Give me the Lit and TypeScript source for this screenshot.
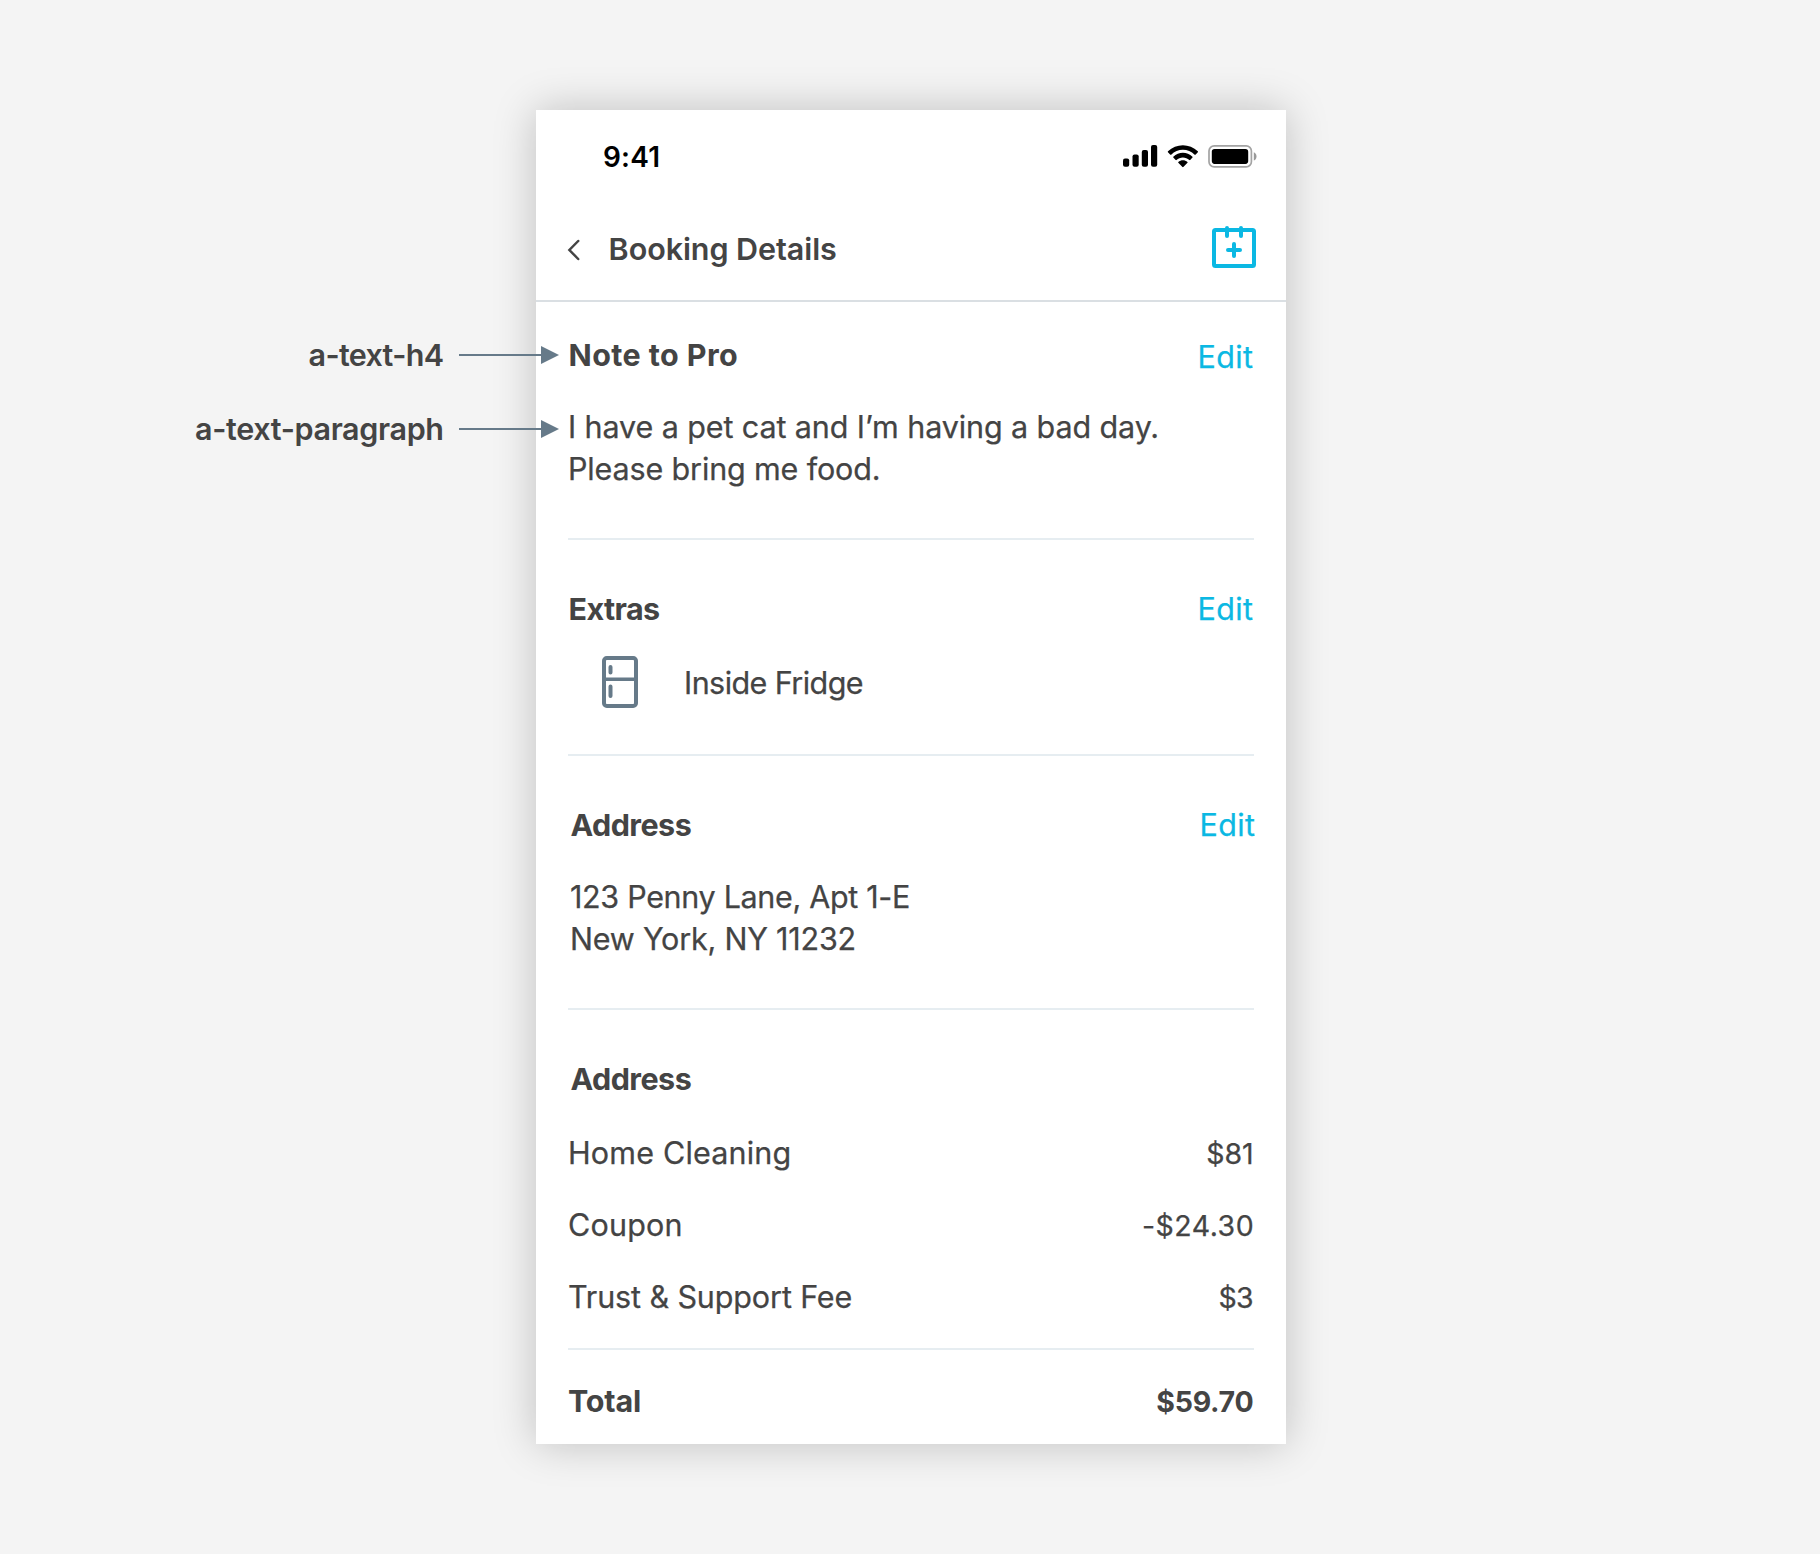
import { LitElement, html, css, svg, nothing } from "lit";
import { customElement, property } from "lit/decorators.js";
import { styleMap } from "lit/directives/style-map.js";

type Label = { text: string; track: number };
const l = (text: string, track = 0): Label => ({ text, track });

/** Text with its own tracking; the trailing gap is cancelled so that right-aligned text ends flush. */
const label = ({ text, track }: Label) =>
  html`<span style=${styleMap({ letterSpacing: `${track}px`, marginRight: `${-track}px` })}>${text}</span>`;

const annotations = [l("a-text-h4", -0.68), l("a-text-paragraph", -0.35)];
const costs: [Label, Label][] = [
  [l("Home Cleaning", 0.18), l("$81", 0)],
  [l("Coupon", 0.2), l("-$24.30", 0.5)],
  [l("Trust & Support Fee", -0.12), l("$3", -0.7)],
];

const arrow = html`<svg class="arrow" width="100" height="18" viewBox="0 0 100 18">
  <path d="M0 9H84" stroke="#667a89" stroke-width="2" />
  <path d="M82 0L100 9L82 18Z" fill="#667a89" />
</svg>`;

const signalIcon = html`<svg width="36" height="22" viewBox="0 0 36 22">
  ${[[1, 13.4], [10.5, 9.4], [19.8, 4.9], [29, 0.1]].map(
    ([x, y]) => svg`<rect x=${x} y=${y} width="6.2" height=${21.8 - y} rx="2" />`,
  )}
</svg>`;

const wifiIcon = html`<svg width="32" height="23" viewBox="1 0 30 21.5">
  <path
    d="M15.9 4.5c4.1 0 8 1.6 11 4.5.2.2.6.2.8 0l2.2-2.2c.2-.2.2-.6 0-.9C22.2-1.6 9.6-1.6 1.9 5.9c-.2.3-.2.7 0 .9l2.2 2.2c.2.2.6.2.8 0 3-2.9 6.900-4.500 11-4.500z"
  />
  <path
    d="M15.9 11.7c2.2 0 4.4.9 6 2.4.2.2.6.2.8 0l2.2-2.3c.2-.2.2-.6 0-.8-5.1-4.9-12.9-4.9-18 0-.2.2-.2.6 0 .8l2.2 2.3c.2.2.6.2.8 0 1.6-1.5 3.8-2.4 6-2.4z"
  />
  <path d="M20.2 16.7c.2-.2.2-.6 0-.8-2.500-2.200-6.100-2.200-8.600 0-.2.2-.2.6 0 .8l3.900 3.900c.2.2.6.2.8 0z" />
</svg>`;

const batteryIcon = html`<svg width="49" height="23" viewBox="0 0 49 23">
  <rect x="1" y="0.9" width="42.4" height="21" rx="5.2" fill="none" stroke="#a3a3a3" stroke-width="1.700" />
  <rect x="3.8" y="3.9" width="36.4" height="15" rx="2.800" />
  <path d="M45.800 7.300v8.200c3.600-1.400 3.600-6.800 0-8.200z" fill="#999" />
</svg>`;

const backIcon = html`<svg class="back" width="14" height="22" viewBox="0 0 14 22">
  <path d="M11.200 2L2.400 11l8.800 9" fill="none" stroke="#444" stroke-width="2.500" stroke-linecap="round" />
</svg>`;

const calendarIcon = html`<svg
  class="calendar"
  width="44"
  height="42"
  viewBox="0 0 44 42"
  fill="none"
  stroke="#0bb8e3"
  stroke-width="4"
  stroke-linecap="round"
>
  <rect x="2" y="4" width="40" height="36" rx="1.5" />
  <path d="M15 2v8M29 2v8M16 24h12M22 18v12" />
</svg>`;

const fridgeIcon = html`<svg class="fridge" width="36" height="52" viewBox="0 0 36 52" fill="none" stroke="#667a89" stroke-linecap="round">
  <rect x="2" y="2" width="32" height="48" rx="2.8" stroke-width="4" />
  <path d="M3 23.3H33" stroke-width="3.6" />
  <path d="M8.500 11v5.500M8.500 30.500v9.500" stroke-width="4" />
</svg>`;

@customElement("detail-section")
class DetailSection extends LitElement {
  static styles = css`
    :host {
      display: block;
      padding: 48px 0;
      border-bottom: 2px solid #e6edf1;
    }
    :host([first]) {
      padding-top: 32px;
    }
    :host([compact]) {
      padding-bottom: 46px;
    }
    :host([tight]) {
      padding-bottom: 30px;
    }
    .head {
      display: flex;
      justify-content: space-between;
      margin-bottom: 30px;
    }
    :host([compact]) .head {
      margin-bottom: 26px;
    }
    :host([tight]) .head {
      margin-bottom: 32px;
    }
    :host([inset]) .head,
    :host([inset]) .body {
      margin-left: 2px;
      margin-right: -2px;
    }
    :host([tight]) .body {
      margin: 0;
    }
    .title {
      font-weight: 700;
      -webkit-text-stroke: 0;
      padding-left: 0.5px;
    }
    .edit {
      color: #0bb8e3;
      letter-spacing: 0.4px;
      margin-right: 0.6px;
    }
    :host([first]) .edit {
      margin-top: 2px;
      margin-bottom: -2px;
    }
  `;

  @property({ attribute: false }) heading: Label = l("");
  @property({ type: Boolean }) editable = false;

  render() {
    return html`<div class="head">
        <div class="title">${label(this.heading)}</div>
        ${this.editable ? html`<div class="edit">Edit</div>` : nothing}
      </div>
      <div class="body"><slot></slot></div>`;
  }
}

@customElement("app-root")
class AppRoot extends LitElement {
  static styles = css`
    :host {
      display: block;
    }
    .stage {
      display: flex;
      align-items: flex-start;
      box-sizing: border-box;
      width: 1820px;
      height: 1554px;
      padding-top: 110px;
      background: #f4f4f4;
      color: #444;
      font: 400 30.5px/42px Inter, "Liberation Sans", sans-serif;
      white-space: nowrap;
      overflow: hidden;
    }
    .notes {
      position: relative;
      z-index: 1;
      flex: none;
      display: flex;
      flex-direction: column;
      gap: 32px;
      box-sizing: border-box;
      width: 559px;
      padding-top: 224px;
    }
    .note {
      display: flex;
      justify-content: flex-end;
      align-items: center;
      gap: 15px;
      font-weight: 600;
    }
    .phone {
      flex: none;
      box-sizing: border-box;
      width: 750px;
      height: 1334px;
      margin-left: -23px;
      background: #fff;
      box-shadow: 0 0 40px rgba(0, 0, 0, 0.22);
    }
    .status {
      display: flex;
      justify-content: space-between;
      box-sizing: border-box;
      height: 88px;
      padding: 26px 29px 0 67px;
      color: #000;
      font-size: 28px;
      font-weight: 600;
    }
    .indicators {
      display: flex;
      gap: 9px;
      padding-top: 9px;
    }
    .nav {
      display: flex;
      align-items: flex-start;
      box-sizing: border-box;
      height: 104px;
      padding: 30px 30px 0 31px;
      border-bottom: 2px solid #dadfe3;
      font-weight: 600;
    }
    .back {
      margin: 11px 27.6px 0 0;
    }
    .calendar {
      margin: -2px 0 0 auto;
    }
    .content {
      padding: 0 32px;
      -webkit-text-stroke: 0.25px;
    }
    .extra {
      display: flex;
      align-items: center;
      gap: 46px;
      padding-left: 34px;
    }
    .extra-name {
      padding-top: 2px;
    }
    .costs {
      display: flex;
      flex-direction: column;
      gap: 30px;
    }
    .cost {
      display: flex;
      justify-content: space-between;
      align-items: baseline;
      height: 42px;
    }
    .price {
      font-size: 28.5px;
      margin-right: 0.3px;
    }
    .total {
      padding-top: 30px;
      font-weight: 700;
      -webkit-text-stroke: 0;
    }
  `;

  render() {
    return html`<div class="stage">
      <div class="notes">${annotations.map((a) => html`<div class="note">${label(a)}${arrow}</div>`)}</div>
      <div class="phone">
        <div class="status">
          <div>${label(l("9:41", 0.2))}</div>
          <div class="indicators">${signalIcon}${wifiIcon}${batteryIcon}</div>
        </div>
        <div class="nav">${backIcon}${label(l("Booking Details", -0.07))}${calendarIcon}</div>
        <div class="content">
          <detail-section first editable .heading=${l("Note to Pro", 0.4)}>
            <div>${label(l("I have a pet cat and I’m having a bad day.", -0.1))}</div>
            <div>${label(l("Please bring me food.", -0.14))}</div>
          </detail-section>
          <detail-section compact editable .heading=${l("Extras", -0.61)}>
            <div class="extra">
              ${fridgeIcon}
              <div class="extra-name">${label(l("Inside Fridge", -0.56))}</div>
            </div>
          </detail-section>
          <detail-section inset editable .heading=${l("Address", -0.55)}>
            <div>${label(l("123 Penny Lane, Apt 1-E", -0.32))}</div>
            <div>${label(l("New York, NY 11232", -0.2))}</div>
          </detail-section>
          <detail-section inset tight .heading=${l("Address", -0.55)}>
            <div class="costs">
              ${costs.map(
                ([name, price]) => html`<div class="cost">
                  <div>${label(name)}</div>
                  <div class="price">${label(price)}</div>
                </div>`,
              )}
            </div>
          </detail-section>
          <div class="cost total">
            <div>${label(l("Total", -0.18))}</div>
            <div class="price">${label(l("$59.70", -0.26))}</div>
          </div>
        </div>
      </div>
    </div>`;
  }
}
